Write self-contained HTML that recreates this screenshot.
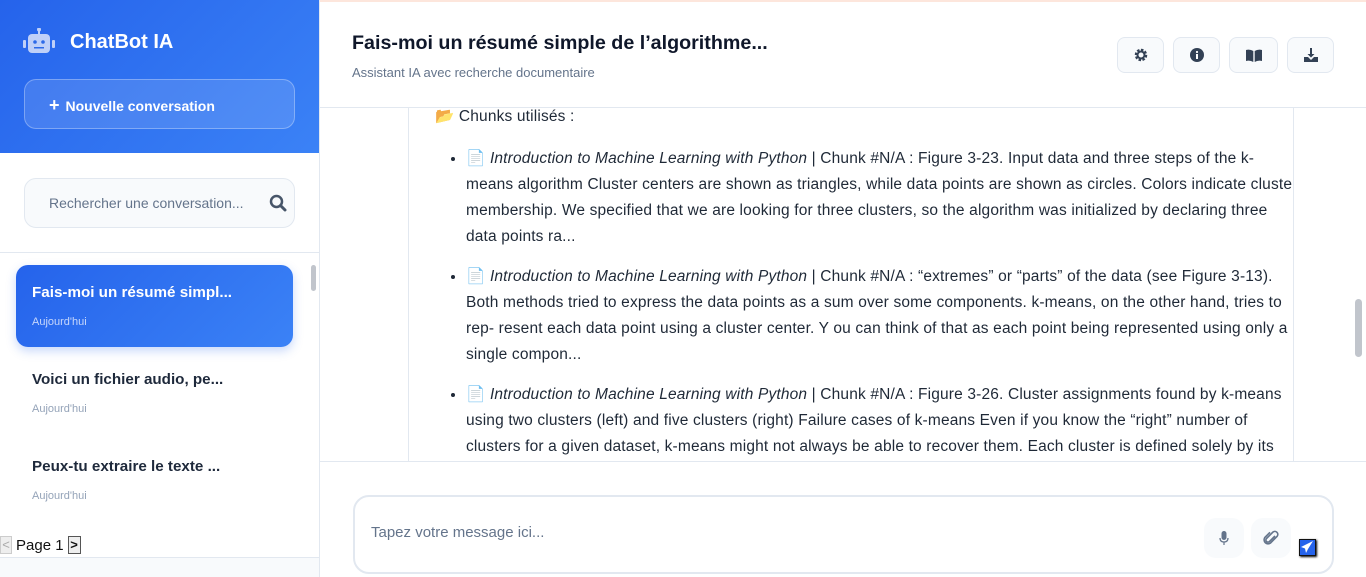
<!DOCTYPE html>
<html><head><meta charset="utf-8"><style>
*{box-sizing:border-box;margin:0;padding:0}
body{width:1366px;height:577px;overflow:hidden;font-family:"Liberation Sans",sans-serif;background:#fff;position:relative;color:#1e293b}
.sb{position:absolute;left:0;top:0;width:320px;height:577px;border-right:1px solid #e2e8f0;background:#fff}
.top{position:absolute;left:0;top:0;width:319px;height:153px;background:linear-gradient(135deg,#2563eb,#3b82f6)}
.brand{position:absolute;left:70px;top:31px;color:#fff;font-weight:bold;font-size:20px}
.newb{position:absolute;left:24px;top:79px;width:271px;height:50px;border:1px solid rgba(255,255,255,.3);border-radius:12px;background:rgba(255,255,255,.12);color:#fff;font-size:14px;font-weight:bold;padding:15px 0 0 24px}
.search{position:absolute;left:24px;top:178px;width:271px;height:50px;border:1px solid #e2e8f0;border-radius:12px;background:#f8fafc;color:#64748b;font-size:14px;padding:16px 0 0 24px}
.line{position:absolute;left:0;top:252px;width:319px;border-top:1px solid #e2e8f0}
.item{position:absolute;left:16px;width:277px;height:82px;border-radius:12px;padding:19px 0 0 16px}
.item b{display:block;font-size:15.2px;color:#1e293b}
.item span{display:block;font-size:11px;color:#94a3b8;margin-top:15px}
.item.act{background:linear-gradient(135deg,#2563eb,#3b82f6);box-shadow:0 4px 10px rgba(37,99,235,.25)}
.item.act b{color:#fff}.item.act span{color:#c7d7fb}
.hdr{position:absolute;left:320px;top:0;width:1046px;height:108px;border-bottom:1px solid #e2e8f0;border-top:2px solid #fde6dc}
.hdr h1{position:absolute;left:32px;top:30px;font-size:19.7px;font-weight:bold;color:#0f172a}
.hdr p{position:absolute;left:32px;top:63px;font-size:13px;color:#64748b}
.btn{position:absolute;top:35px;height:36px;border:1px solid #e2e8f0;border-radius:8px;background:#f8fafc;display:flex;align-items:center;justify-content:center}
.msg{position:absolute;left:408px;top:108px;width:886px;height:353px;border-left:1px solid #e2e8f0;border-right:1px solid #e2e8f0;overflow:hidden;font-size:15.5px;letter-spacing:.16px;line-height:26px;color:#1f2937;white-space:nowrap}
.msg ul{margin:16px 0 0 57px;padding-left:0}
.msg li{margin-bottom:14px;padding-right:0;list-style:disc}
.scroll{position:absolute;left:1355px;top:299px;width:7px;height:58px;background:#c1c5cc;border-radius:4px}
.inp{position:absolute;left:320px;top:461px;width:1046px;height:116px;border-top:1px solid #e2e8f0}
.box{position:absolute;left:33px;top:33px;width:981px;height:79px;border:2px solid #e2e8f0;border-radius:16px;color:#64748b;font-size:15px;padding:27px 0 0 16px}
.ib{position:absolute;top:21px;width:40px;height:40px;border-radius:12px;background:#f8fafc;display:flex;align-items:center;justify-content:center}
</style></head><body>
<div class="sb">
<div class="top">
<svg style="position:absolute;left:23px;top:28px" width="32" height="26" viewBox="0 0 32 26"><rect x="5" y="6" width="22" height="19" rx="4" fill="#bfd0f8"/><rect x="15" y="0" width="2" height="6" fill="#bfd0f8"/><circle cx="16" cy="1.5" r="2" fill="#bfd0f8"/><rect x="0" y="12" width="3" height="8" rx="1" fill="#bfd0f8"/><rect x="29" y="12" width="3" height="8" rx="1" fill="#bfd0f8"/><circle cx="12" cy="14" r="1.8" fill="#2d6ae8"/><circle cx="20" cy="14" r="1.8" fill="#2d6ae8"/><rect x="11" y="19" width="10" height="1.5" fill="#2d6ae8"/></svg>
<div class="brand">ChatBot IA</div>
<div class="newb"><span style="font-size:18px;margin-right:6px">+</span>Nouvelle conversation</div>
</div>
<div class="search">Rechercher une conversation...
<svg style="position:absolute;right:7px;top:15px" width="18" height="18" viewBox="0 0 18 18"><circle cx="7.5" cy="7.5" r="5.5" stroke="#475569" stroke-width="2.5" fill="none"/><line x1="11.5" y1="11.5" x2="16" y2="16" stroke="#475569" stroke-width="3" stroke-linecap="round"/></svg></div>
<div class="line"></div>
<div style="position:absolute;left:311px;top:265px;width:5px;height:26px;background:#c1c5cc;border-radius:3px"></div>
<div class="item act" style="top:265px"><b>Fais-moi un résumé simpl...</b><span>Aujourd'hui</span></div>
<div class="item" style="top:352px"><b>Voici un fichier audio, pe...</b><span>Aujourd'hui</span></div>
<div class="item" style="top:439px"><b>Peux-tu extraire le texte ...</b><span>Aujourd'hui</span></div>
<div style="position:absolute;left:0;top:536px;font-size:15px;color:#111;display:flex;align-items:center;gap:4px">
<span style="display:inline-block;width:12px;height:18px;border:1px solid #ccc;background:#eee;color:#aaa;font-size:13px;line-height:16px;text-align:center">&lt;</span>Page 1<span style="display:inline-block;width:13px;height:18px;border:1px solid #555;background:#eee;font-size:13px;line-height:16px;text-align:center;font-weight:bold">&gt;</span></div>
<div style="position:absolute;left:0;top:557px;width:319px;height:20px;background:#f8fafc;border-top:1px solid #e2e8f0"></div>
</div>
<div class="hdr">
<h1>Fais-moi un résumé simple de l’algorithme...</h1>
<p>Assistant IA avec recherche documentaire</p>
<div class="btn" style="left:797px;width:47px"><svg width="14" height="14" viewBox="0 0 14 14"><circle cx="7" cy="7" r="4.5" fill="none" stroke="#334155" stroke-width="3.5" stroke-dasharray="2.2 1.3"/><circle cx="7" cy="7" r="3.5" fill="none" stroke="#334155" stroke-width="2"/></svg></div>
<div class="btn" style="left:853px;width:47px"><svg width="14" height="14"><circle cx="7" cy="7" r="7" fill="#334155"/><rect x="6" y="6" width="2" height="5" fill="#fff"/><circle cx="7" cy="4" r="1.1" fill="#fff"/></svg></div>
<div class="btn" style="left:909px;width:49px"><svg width="16" height="13"><path d="M0 1Q4 0 7.3 2V13Q4 11 0 12Z M16 1Q12 0 8.7 2V13Q12 11 16 12Z" fill="#334155"/></svg></div>
<div class="btn" style="left:967px;width:47px"><svg width="14" height="14"><path d="M6 0h2v6h2.5L7 9.5 3.5 6H6z" fill="#334155"/><path d="M0 9h4l3 3 3-3h4v5H0z" fill="#334155"/></svg></div>
</div>
<div class="msg">
<div style="margin:-4px 0 0 26px">📂 Chunks utilisés :</div>
<ul>
<li>📄 <i>Introduction to Machine Learning with Python</i> | Chunk #N/A : Figure 3-23. Input data and three steps of the k-<br>means algorithm Cluster centers are shown as triangles, while data points are shown as circles. Colors indicate cluster<br>membership. We specified that we are looking for three clusters, so the algorithm was initialized by declaring three<br>data points ra...</li>
<li>📄 <i>Introduction to Machine Learning with Python</i> | Chunk #N/A : “extremes” or “parts” of the data (see Figure 3-13).<br>Both methods tried to express the data points as a sum over some components. k-means, on the other hand, tries to<br>rep- resent each data point using a cluster center. Y ou can think of that as each point being represented using only a<br>single compon...</li>
<li>📄 <i>Introduction to Machine Learning with Python</i> | Chunk #N/A : Figure 3-26. Cluster assignments found by k-means<br>using two clusters (left) and five clusters (right) Failure cases of k-means Even if you know the “right” number of<br>clusters for a given dataset, k-means might not always be able to recover them. Each cluster is defined solely by its</li>
</ul>
</div>
<div class="scroll"></div>
<div class="inp">
<div class="box">Tapez votre message ici...
<div class="ib" style="left:849px"><svg width="10" height="15"><rect x="2.5" y="0" width="5" height="9" rx="2.5" fill="#64748b"/><path d="M1 7Q1 11 5 11Q9 11 9 7" stroke="#64748b" fill="none" stroke-width="1.3"/><rect x="4.4" y="11" width="1.2" height="3" fill="#64748b"/></svg></div>
<div class="ib" style="left:896px"><svg width="16" height="16" viewBox="0 0 16 16"><path d="M12 6L6.5 11.5a2 2 0 01-3-3L10 2a3 3 0 014.2 4.2L7.5 13a4 4 0 01-5.6-5.6L7 2.3" stroke="#64748b" stroke-width="1.6" fill="none"/></svg></div>
<div style="position:absolute;left:944px;top:42px;width:17px;height:17px;background:#2563eb;border:1.5px solid #111;box-shadow:1px 1px 2px #000"><svg width="14" height="14" viewBox="0 0 14 14"><path d="M13 1L1 7l4 1.5L6 13l2-4z" fill="#fff"/></svg></div>
</div>
</div>
</body></html>
